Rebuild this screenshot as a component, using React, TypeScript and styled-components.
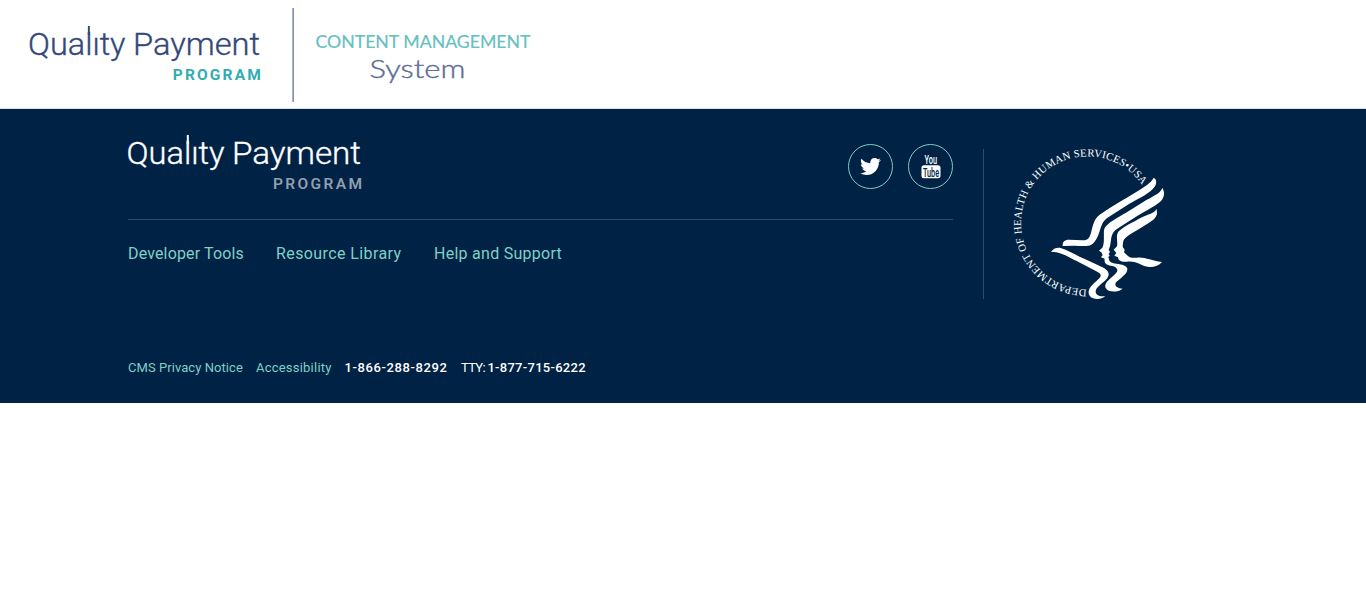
import React from "react";
import styled, { createGlobalStyle } from "styled-components";
import { FaTwitter } from "react-icons/fa";

const GlobalStyle = createGlobalStyle`
  body {
    margin: 0;
    background: #fff;
    font-family: Roboto, "Liberation Sans", sans-serif;
  }
  *, *::before, *::after { box-sizing: border-box; }
`;

const Header = styled.header`
  display: flex;
  align-items: flex-start;
  height: 109px;
  padding: 8px 0 0 24px;
  border-bottom: 1px solid #dcdfe6;
`;

const HeaderDivider = styled.div`
  width: 2px;
  height: 94px;
  margin: 0 18px 0 30px;
  background: linear-gradient(90deg, #a9b2c8 50%, #8491af 50%);
`;

const Drawing = styled.svg`
  display: block;
  flex: none;
  overflow: visible;
`;

const Footer = styled.footer`
  display: flex;
  flex-direction: column;
  height: 294px;
  padding: 0 202px 0 128px;
  background: #002244;
`;

const FooterTop = styled.div`
  display: flex;
  height: 231px;
`;

const FooterMain = styled.div`
  width: 825px;
`;

const BrandRow = styled.div`
  display: flex;
  justify-content: space-between;
  height: 111px;
  padding-top: 23px;
  border-bottom: 1px solid #2f4d70;
`;

const Social = styled.div`
  display: flex;
  gap: 15px;
  padding-top: 12px;
`;

const SocialLink = styled.a`
  display: flex;
  align-items: center;
  justify-content: center;
  width: 45px;
  height: 45px;
  border: 1px solid #7fcdc4;
  border-radius: 50%;
  color: #fff;
`;

const SealPanel = styled.div`
  height: 150px;
  margin: 40px 0 0 30px;
  padding-left: 30px;
  border-left: 1px solid #2f4d70;
`;

const Nav = styled.nav`
  display: flex;
  gap: 32px;
  padding-top: 24px;
`;

const NavLink = styled.a<{ $width: number; $spacing: number }>`
  width: ${(p) => p.$width}px;
  color: #7fd1c7;
  font-size: 16px;
  line-height: 20px;
  letter-spacing: ${(p) => p.$spacing}px;
  white-space: nowrap;
`;

const Legal = styled.div`
  display: flex;
  padding-top: 19px;
  font-size: 13px;
  line-height: 18px;
  color: #fff;
`;

const LegalItem = styled.span<{ $width: number; $spacing?: number; $link?: boolean }>`
  width: ${(p) => p.$width}px;
  color: ${(p) => (p.$link ? "#7fd1c7" : "#fff")};
  letter-spacing: ${(p) => p.$spacing ?? 0}px;
  white-space: nowrap;
`;

const Phone = styled.b<{ $spacing?: number }>`
  font-weight: 500;
  letter-spacing: ${(p) => p.$spacing ?? 0}px;
`;

function BrandLogo({ main, sub }: { main: string; sub: string }) {
  return (
    <Drawing width={240} height={64} viewBox="0 0 240 64" role="img" aria-label="Quality Payment Program">
      <g fill={main} stroke={main} strokeWidth="0.35" fontSize="31.5" fontWeight="300">
        <text x="-1.5" y="32" textLength="98" lengthAdjust="spacingAndGlyphs">Qualıty</text>
        <text x="104" y="32" textLength="129" lengthAdjust="spacingAndGlyphs">Payment</text>
      </g>
      {/* raised stem of the l */}
      <rect x="58.8" y="3" width="2" height="9" fill={main} />
      <text x="145" y="57" fill={sub} fontSize="15.5" fontWeight="600" textLength="89" lengthAdjust="spacing">
        PROGRAM
      </text>
    </Drawing>
  );
}

function YouTubeIcon() {
  return (
    <Drawing width="20" height="24" viewBox="0 0 20 24" role="img" aria-label="YouTube">
      <text x="3.5" y="9.3" fill="#fff" fontSize="13" fontWeight="500" textLength="12.5" lengthAdjust="spacingAndGlyphs">You</text>
      <rect x="0.5" y="10.3" width="19" height="13" rx="2.5" fill="#fff" />
      <text x="2" y="21.6" fill="#002244" fontSize="13" fontWeight="500" textLength="16" lengthAdjust="spacingAndGlyphs">Tube</text>
    </Drawing>
  );
}

function Seal() {
  return (
    <Drawing width="150" height="150" viewBox="42 42 450 450" role="img" aria-label="Department of Health and Human Services USA">
      <path id="seal-ring" d="M260 463A199.5 199.5 0 1 1 430 155" fill="none" />
      <text fill="#fff" fontFamily="'Liberation Serif', serif" fontSize="32">
        <textPath href="#seal-ring" textLength="816" lengthAdjust="spacing">
          DEPARTMENT OF HEALTH &amp; HUMAN SERVICES•USA
        </textPath>
      </text>
      <g fill="#fff">
        <path d="M461 128C470 132 471 145 464 155C451 174 420 188 387 207L326 246C309 257 307 266 301 282C295 301 289 320 274 329C261 336 242 332 222 332L188 333C187 321 193 314 207 314L247 316C264 317 269 307 273 293C279 270 282 252 299 239C334 213 372 194 410 170C434 155 452 145 461 128Z" />
        <path d="M487 159C494 169 494 184 486 194C474 210 443 223 415 241L354 280C338 290 335 300 333 315L330 334L326 345L330 351L326 356L329 362L325 366L327 373C328 382 337 385 349 386C367 388 383 392 382 404C381 418 359 430 348 442C342 452 351 461 368 461C354 473 324 473 317 459C309 440 341 426 351 410C355 400 346 394 333 392C318 390 312 384 314 371L303 367L308 360L304 352L297 347L307 338L310 330C314 313 309 291 314 279C324 262 353 248 378 233L438 196C462 182 480 176 487 159Z" />
        <path d="M469 222C474 235 470 246 460 254C446 265 424 277 402 291C384 302 371 309 369 323L368 335L374 345L372 352L383 362C390 369 399 369 412 368C438 366 452 378 486 381C477 392 462 397 447 396C425 394 409 376 382 380C363 382 355 377 354 367L343 362L349 354L341 344L351 334C354 319 346 302 356 289C373 272 401 261 423 248C444 238 464 235 469 222Z" />
        <path d="M153 351C160 341 171 336 184 340C207 348 230 361 256 373L306 396C321 403 329 412 325 423C320 440 289 452 287 468C286 479 298 486 316 483C305 495 279 495 270 484C255 462 283 446 298 430C307 419 301 414 286 407L230 378C201 365 180 348 153 351Z" />
      </g>
    </Drawing>
  );
}

export default function App() {
  return (
    <>
      <GlobalStyle />
      <Header>
        <Drawing width="238" height="94" viewBox="0 0 238 94" role="img" aria-label="Quality Payment Program">
          <g fill="#334879" stroke="#334879" strokeWidth="0.35" fontSize="31.5" fontWeight="300">
            <text x="4" y="47" textLength="97.5" lengthAdjust="spacingAndGlyphs">Qualıty</text>
            <text x="109" y="47" textLength="127" lengthAdjust="spacingAndGlyphs">Payment</text>
          </g>
          {/* raised stem of the l */}
          <rect x="63.9" y="18" width="1.9" height="9" fill="#334879" />
          <text x="148.8" y="72" fill="#31adb2" fontSize="15.5" fontWeight="700" textLength="88" lengthAdjust="spacing">PROGRAM</text>
        </Drawing>
        <HeaderDivider />
        <Drawing width="226" height="94" viewBox="0 0 226 94" role="img" aria-label="Content Management System">
          <g fontFamily="Lato, sans-serif">
            <text x="3.5" y="39.8" fill="#67bfc2" stroke="#67bfc2" strokeWidth="0.2" fontSize="17" fontWeight="400" textLength="215" lengthAdjust="spacingAndGlyphs">CONTENT MANAGEMENT</text>
            <text x="57.5" y="70" fill="#5f6d98" stroke="#5f6d98" strokeWidth="0.4" fontSize="26" fontWeight="300" textLength="96" lengthAdjust="spacingAndGlyphs">System</text>
          </g>
        </Drawing>
      </Header>
      <Footer>
        <FooterTop>
          <FooterMain>
            <BrandRow>
              <BrandLogo main="#fff" sub="#919fb0" />
              <Social>
                <SocialLink aria-label="Twitter"><FaTwitter size={21} /></SocialLink>
                <SocialLink aria-label="YouTube"><YouTubeIcon /></SocialLink>
              </Social>
            </BrandRow>
            <Nav>
              <NavLink $width={116} $spacing={0.15}>Developer Tools</NavLink>
              <NavLink $width={126} $spacing={0.4}>Resource Library</NavLink>
              <NavLink $width={128} $spacing={0.27}>Help and Support</NavLink>
            </Nav>
          </FooterMain>
          <SealPanel><Seal /></SealPanel>
        </FooterTop>
        <Legal>
          <LegalItem $link $width={128} $spacing={0.06}>CMS Privacy Notice</LegalItem>
          <LegalItem $link $width={88.5} $spacing={0.22}>Accessibility</LegalItem>
          <LegalItem $width={116.5}><Phone $spacing={0.6}>1-866-288-8292</Phone></LegalItem>
          <LegalItem $width={130} $spacing={-0.7}>TTY: <Phone $spacing={0.28}>1-877-715-6222</Phone></LegalItem>
        </Legal>
      </Footer>
    </>
  );
}
